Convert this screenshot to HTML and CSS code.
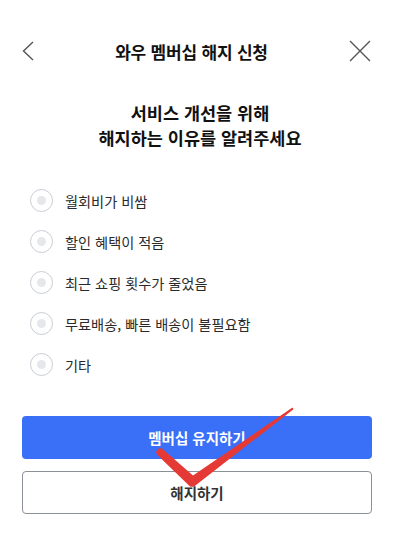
FILE: index.html
```html
<!DOCTYPE html>
<html lang="ko">
<head>
<meta charset="utf-8">
<title>와우 멤버십 해지 신청</title>
<link rel="stylesheet" href="styles.css">
</head>
<body>
<div class="page">
  <header class="header">
    <button class="icon-btn back" aria-label="뒤로">
      <svg width="12" height="20" viewBox="0 0 12 20"><path d="M11 1 L1.5 10 L11 19" fill="none" stroke="#555" stroke-width="1.4"/></svg>
    </button>
    <h1 class="title">와우 멤버십 해지 신청</h1>
    <button class="icon-btn close" aria-label="닫기">
      <svg width="22" height="22" viewBox="0 0 22 22"><path d="M1 1 L21 21 M21 1 L1 21" fill="none" stroke="#555" stroke-width="1.4"/></svg>
    </button>
  </header>

  <h2 class="heading">서비스 개선을 위해<br>해지하는 이유를 알려주세요</h2>

  <ul class="reasons">
    <li class="reason"><span class="radio"></span><span class="label">월회비가 비쌈</span></li>
    <li class="reason"><span class="radio"></span><span class="label">할인 혜택이 적음</span></li>
    <li class="reason"><span class="radio"></span><span class="label">최근 쇼핑 횟수가 줄었음</span></li>
    <li class="reason"><span class="radio"></span><span class="label">무료배송, 빠른 배송이 불필요함</span></li>
    <li class="reason"><span class="radio"></span><span class="label">기타</span></li>
  </ul>

  <div class="actions">
    <button class="btn btn-primary">멤버십 유지하기</button>
    <button class="btn btn-outline">해지하기</button>
    <svg class="check-mark" width="150" height="90" viewBox="0 0 150 90">
      <path d="M16.6 42 L47 68.5 L146.5 0.5 L147.5 2.2 L50 78 C48 80 45 80.5 43.5 79 L11.4 48 A4 4 0 0 1 16.6 42 Z" fill="#e53935"/>
    </svg>
  </div>
</div>
</body>
</html>
```
FILE: styles.css
```css
* { box-sizing: border-box; }
html, body { margin: 0; padding: 0; background: #fff; }
body {
  font-family: "Noto Sans CJK KR", "Noto Sans", sans-serif;
  color: #222;
}
.page { width: 400px; }
.header {
  display: flex;
  align-items: center;
  justify-content: space-between;
  height: 42px;
  margin-top: 30px;
  padding: 0 29px 0 22px;
}
.icon-btn {
  border: 0;
  background: none;
  padding: 0;
  display: flex;
  align-items: center;
}
.title {
  margin: 0;
  font-size: 17px;
  font-weight: 700;
  color: #111;
  letter-spacing: -0.2px;
}
.heading {
  margin: 28px 0 0;
  text-align: center;
  font-size: 17.5px;
  line-height: 25px;
  font-weight: 700;
  color: #111;
}
.reasons {
  list-style: none;
  margin: 30px 0 0;
  padding: 0 0 0 30px;
}
.reason {
  display: flex;
  align-items: center;
  height: 41px;
}
.radio {
  width: 23px;
  height: 23px;
  border-radius: 50%;
  border: 1.5px solid #c9cdd4;
  display: flex;
  align-items: center;
  justify-content: center;
  margin-right: 12px;
}
.radio::after {
  content: "";
  width: 9px;
  height: 9px;
  border-radius: 50%;
  background: #e6e7ea;
}
.label {
  font-size: 14.2px;
  color: #2a2a2a;
}
.actions {
  position: relative;
  margin-top: 31px;
  padding: 0 28px 0 22px;
  display: flex;
  flex-direction: column;
  gap: 12px;
}
.btn {
  height: 43px;
  border-radius: 4px;
  font-family: inherit;
  font-size: 14.5px;
  font-weight: 700;
}
.btn-primary {
  background: #3a6ff8;
  color: #fff;
  border: 0;
}
.btn-outline {
  background: #fff;
  color: #333;
  border: 1px solid #8c9099;
}
.check-mark {
  position: absolute;
  left: 146px;
  top: -9px;
}
```
